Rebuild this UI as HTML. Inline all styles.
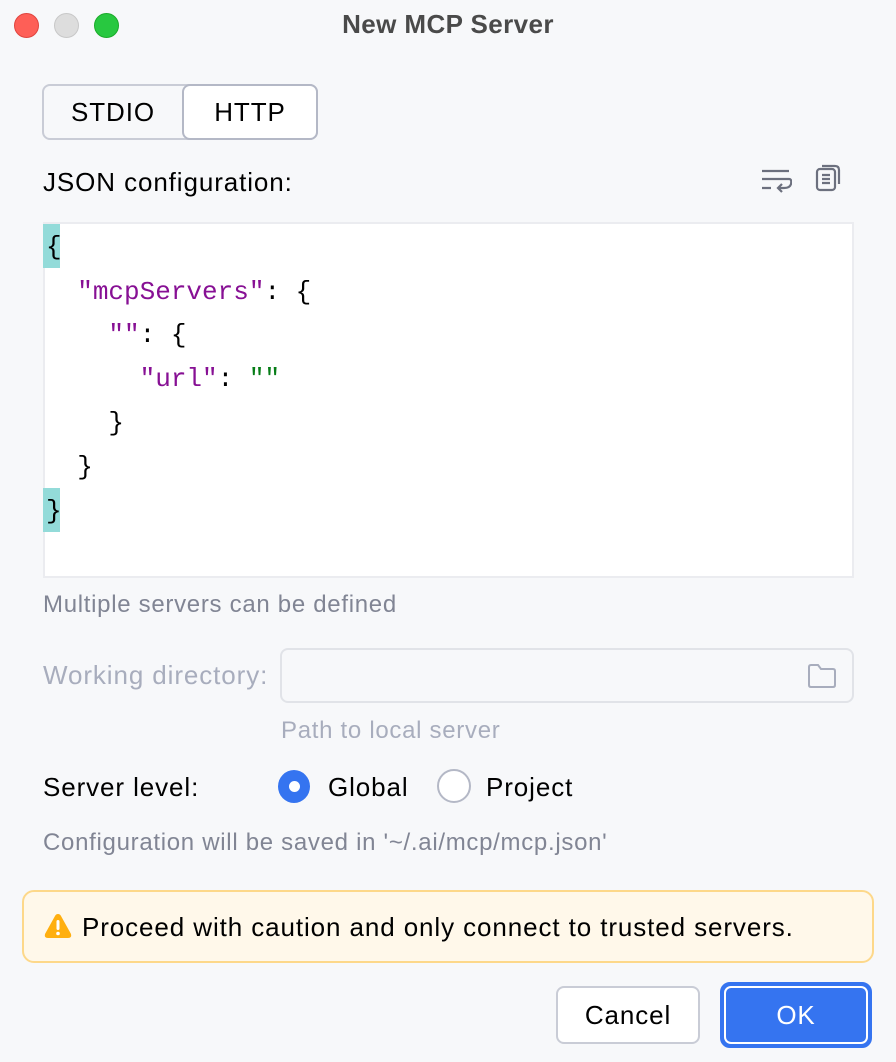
<!DOCTYPE html>
<html><head><meta charset="utf-8"><style>
*{box-sizing:border-box;margin:0;padding:0}
body{width:896px;height:1062px;background:#f7f8fa;font-family:"Liberation Sans",sans-serif;position:relative;overflow:hidden;color:#000}
.a{position:absolute;white-space:nowrap}
.t{font-size:26px;letter-spacing:0.9px}
.s{font-size:24px;letter-spacing:0.7px}
.dot{position:absolute;top:13px;width:25px;height:25px;border-radius:50%}
.code{position:absolute;left:43px;top:222px;width:811px;height:356px;background:#fff;border:2px solid #ebecf0;font-family:"Liberation Mono",monospace;font-size:26px}
.ln{position:absolute;left:1px;height:44px;line-height:44px;white-space:pre}
.p{color:#871094}.g{color:#067d17}
</style></head><body>
<div class="dot" style="left:14px;background:#fe5f57;border:1px solid #e0443e"></div>
<div class="dot" style="left:54px;background:#dddddd;border:1px solid #c8c8c8"></div>
<div class="dot" style="left:94px;background:#28c840;border:1px solid #1aab29"></div>
<div class="a" style="left:0;width:896px;text-align:center;top:9px;font-size:26px;letter-spacing:0.4px;font-weight:bold;color:#4a4a4a">New MCP Server</div>

<div class="a" style="left:42px;top:84px;width:276px;height:56px;border:2px solid #c9ccd6;border-radius:8px;background:#f7f8fa"></div>
<div class="a" style="left:182px;top:84px;width:136px;height:56px;border:2px solid #b4b8c6;border-radius:8px;background:#fff"></div>
<div class="a t" style="left:42px;top:97px;width:142px;text-align:center">STDIO</div>
<div class="a t" style="left:182px;top:97px;width:136px;text-align:center">HTTP</div>

<div class="a t" style="left:43px;top:167px">JSON configuration:</div>
<svg class="a" style="left:760px;top:166px" width="32" height="30" viewBox="0 0 32 30" fill="none" stroke="#6c707e" stroke-width="2.2"><path d="M2 5H29M2 13H29Q32 13 31 18Q30 22 24 22H19M22 18L18 22L22 26M2 22H11"/></svg>
<svg class="a" style="left:814px;top:164px" width="28" height="30" viewBox="0 0 28 30" fill="none" stroke="#6c707e" stroke-width="2.2"><rect x="3" y="5" width="18" height="21" rx="3"/><path d="M8 2H21Q25 2 25 6V20M8 11H16M8 15H16M8 19H16"/></svg>

<div class="code">
<div style="position:absolute;left:-2px;top:0;width:17px;height:44px;background:#93dbd9"></div>
<div style="position:absolute;left:-2px;top:264px;width:17px;height:44px;background:#93dbd9"></div>
<div class="ln" style="top:1px">{</div>
<div class="ln" style="top:46px">  <span class="p">"mcpServers"</span>: {</div>
<div class="ln" style="top:89px">    <span class="p">""</span>: {</div>
<div class="ln" style="top:133px">      <span class="p">"url"</span>: <span class="g">""</span></div>
<div class="ln" style="top:177px">    }</div>
<div class="ln" style="top:221px">  }</div>
<div class="ln" style="top:265px">}</div>
</div>

<div class="a s" style="left:43px;top:591px;color:#818594">Multiple servers can be defined</div>
<div class="a t" style="left:43px;top:660px;color:#a8adbd">Working directory:</div>
<div class="a" style="left:280px;top:648px;width:574px;height:55px;border:2px solid #e1e3e8;border-radius:8px"></div>
<svg class="a" style="left:807px;top:663px" width="30" height="26" viewBox="0 0 30 26" fill="none" stroke="#a8adbd" stroke-width="2"><path d="M2 4Q2 2 4 2H11L14 6H26Q28 6 28 8V22Q28 24 26 24H4Q2 24 2 22Z"/></svg>
<div class="a s" style="left:281px;top:717px;color:#a8adbd">Path to local server</div>

<div class="a t" style="left:43px;top:772px">Server level:</div>
<div class="a" style="left:278px;top:770px;width:32px;height:33px;border-radius:50%;background:#3574f0"></div>
<div class="a" style="left:289px;top:781px;width:11px;height:11px;border-radius:50%;background:#fff"></div>
<div class="a t" style="left:328px;top:772px">Global</div>
<div class="a" style="left:437px;top:769px;width:34px;height:34px;border-radius:50%;background:#fff;border:2px solid #b4b8c6"></div>
<div class="a t" style="left:486px;top:772px">Project</div>

<div class="a s" style="left:43px;top:829px;color:#818594">Configuration will be saved in '~/.ai/mcp/mcp.json'</div>

<div class="a" style="left:22px;top:890px;width:852px;height:73px;background:#fff8ea;border:2px solid #fdd88a;border-radius:12px"></div>
<svg class="a" style="left:43px;top:912px" width="30" height="28" viewBox="0 0 30 28"><path d="M15 2Q17 2 18 4L28 22Q29 26 25 26H5Q1 26 2 22L12 4Q13 2 15 2Z" fill="#ffaf0f"/><rect x="13.5" y="8" width="3" height="10" rx="1.5" fill="#fff"/><circle cx="15" cy="21.5" r="1.8" fill="#fff"/></svg>
<div class="a t" style="left:82px;top:912px">Proceed with caution and only connect to trusted servers.</div>

<div class="a t" style="left:556px;top:986px;width:144px;height:58px;background:#fff;border:2px solid #c9ccd6;border-radius:8px;text-align:center;line-height:54px">Cancel</div>
<div class="a" style="left:720px;top:982px;width:152px;height:66px;border:3px solid #3574f0;border-radius:10px;background:#3574f0"></div>
<div class="a t" style="left:724px;top:986px;width:144px;height:58px;border:2px solid #fff;border-radius:7px;background:#3574f0;color:#fff;text-align:center;line-height:54px">OK</div>
</body></html>
